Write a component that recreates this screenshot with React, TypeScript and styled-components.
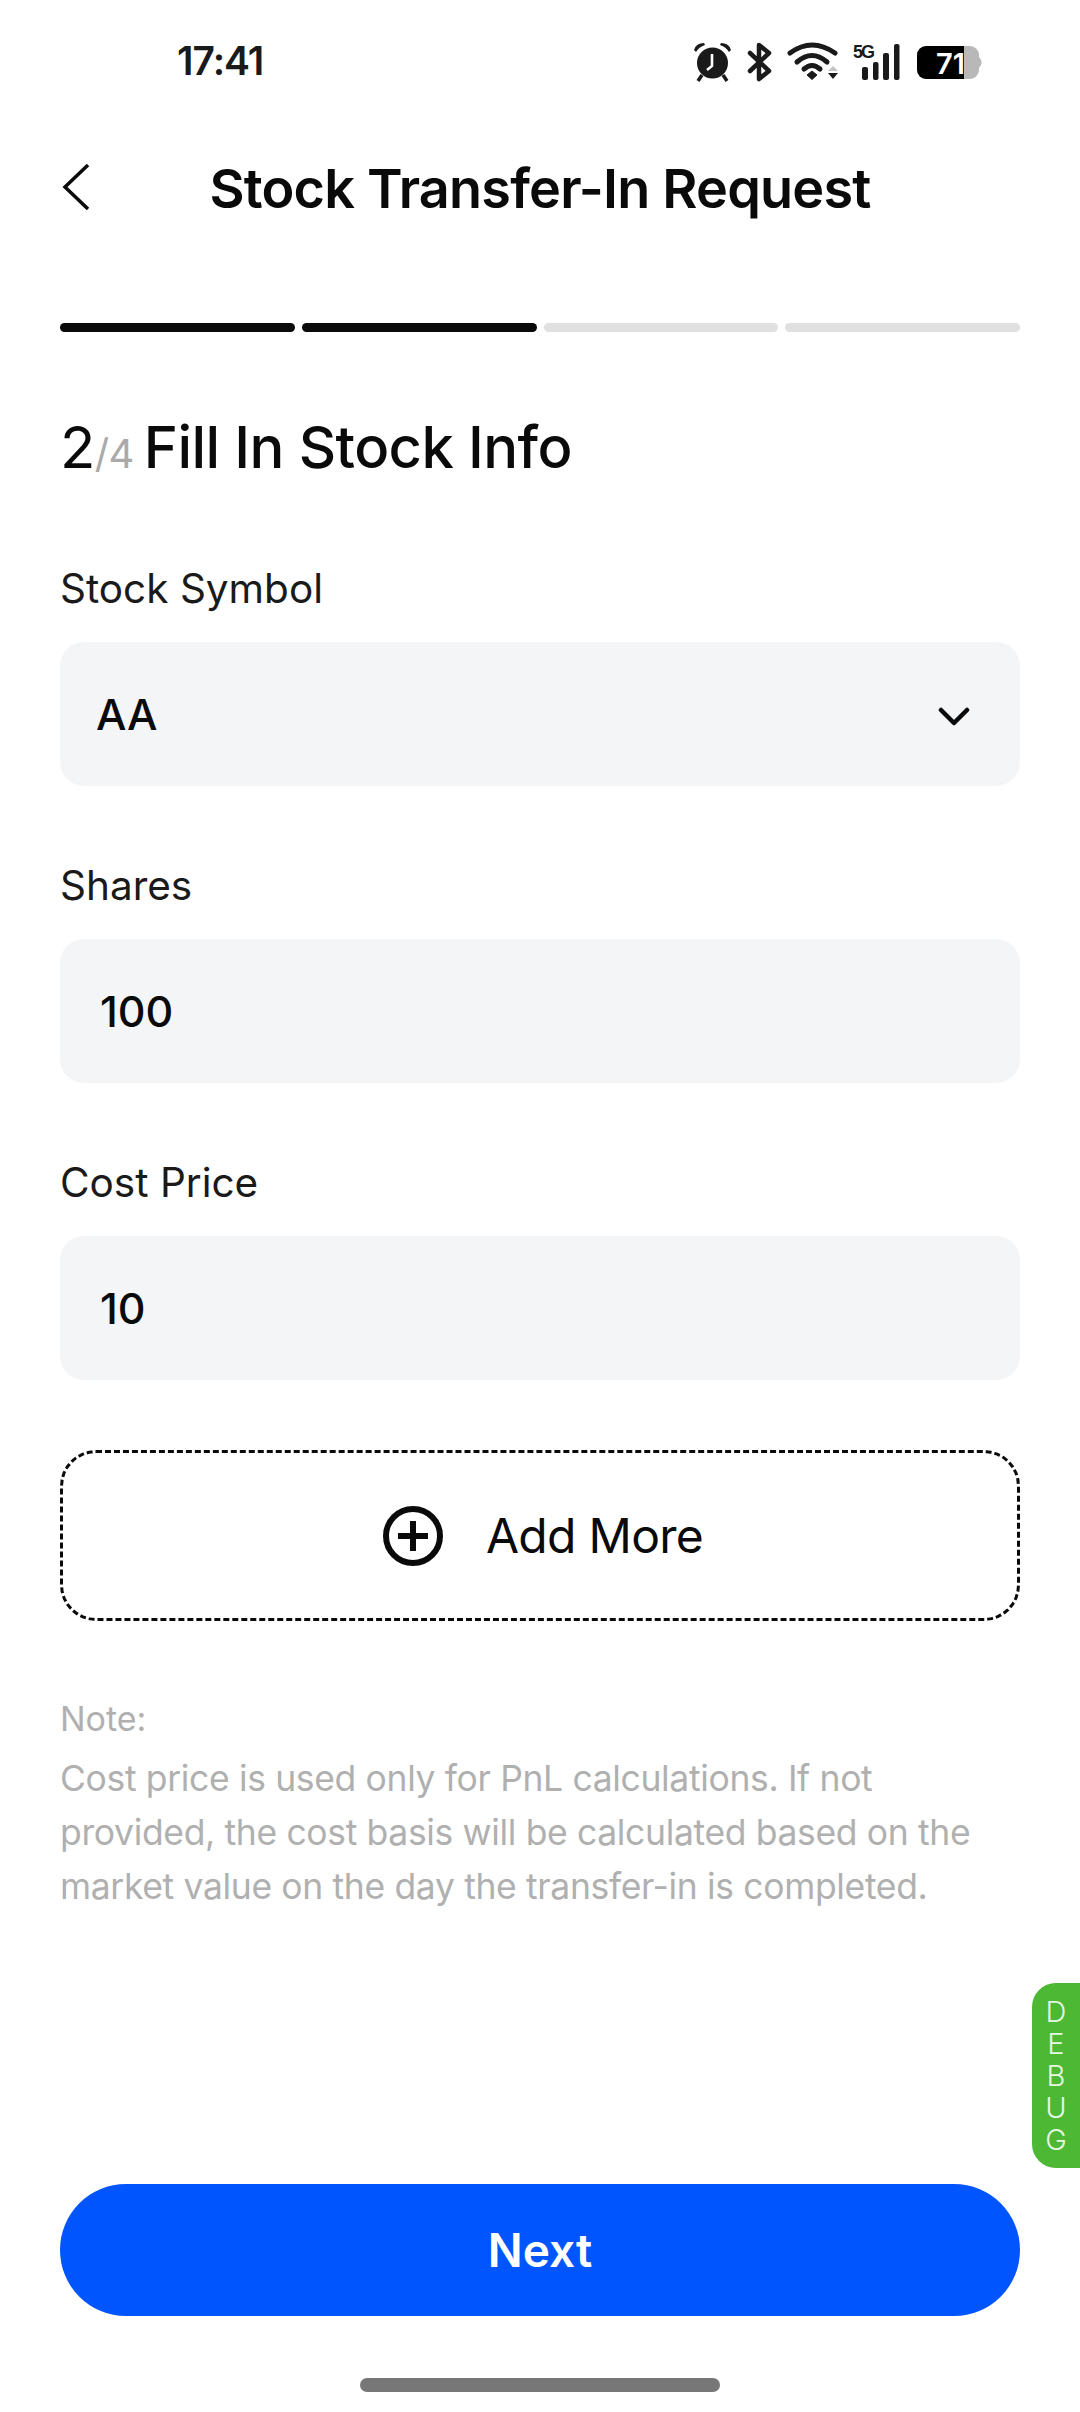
import React from 'react';
import styled, { createGlobalStyle } from 'styled-components';

const GlobalStyle = createGlobalStyle`
  * { box-sizing: border-box; }
  html, body { margin: 0; padding: 0; background: #fff; }
  body { font-family: Inter, "Liberation Sans", sans-serif; color: #0a0a0a; }
`;

const Page = styled.div`
  position: relative;
  width: 1080px;
  height: 2412px;
  display: flex;
  flex-direction: column;
  overflow: hidden;
  background: #fff;
`;

const StatusBar = styled.div`
  height: 120px;
  padding: 0 94px 0 177px;
  display: flex;
  align-items: center;
  justify-content: space-between;
`;

const Time = styled.div`
  font-size: 39px;
  font-weight: 600;
  letter-spacing: -1px;
  color: #1a1a1a;
`;

const StatusIcons = styled.div`
  display: flex;
  align-items: center;
  margin-top: 5px;
`;

const Header = styled.div`
  position: relative;
  height: 136px;
  display: flex;
  align-items: center;
  justify-content: center;
`;

const BackButton = styled.div`
  position: absolute;
  left: 62px;
  top: 44px;
  display: flex;
`;

const Title = styled.h1`
  margin: 0;
  font-size: 54px;
  font-weight: 600;
  letter-spacing: -0.8px;
`;

const Content = styled.div`
  flex: 1;
  padding: 0 60px;
  display: flex;
  flex-direction: column;
`;

const Steps = styled.div`
  margin-top: 67px;
  display: grid;
  grid-template-columns: repeat(4, 1fr);
  gap: 7px;
`;

const Step = styled.div<{ $active?: boolean }>`
  height: 9px;
  border-radius: 5px;
  background: ${({ $active }) => ($active ? '#0a0a0a' : '#e0e0e0')};
`;

const Heading = styled.div`
  margin-top: 85px;
  margin-bottom: 12px;
  height: 60px;
  display: flex;
  align-items: baseline;
  font-size: 58px;
  font-weight: 500;
  letter-spacing: -0.6px;
  line-height: 60px;
`;

const StepCurrent = styled.span`
  font-weight: 400;
`;

const StepTotal = styled.span`
  font-size: 40px;
  font-weight: 400;
  color: #aaa;
  margin-right: 10px;
`;

const Field = styled.div`
  margin-top: 75px;
  display: flex;
  flex-direction: column;
  gap: 28px;
`;

const Label = styled.div`
  font-size: 40.5px;
  line-height: 50px;
  color: #1a1a1a;
`;

const InputBox = styled.div<{ $select?: boolean }>`
  height: 144px;
  border-radius: 24px;
  background: #f4f5f7;
  padding: ${({ $select }) => ($select ? '0 50px 0 36px' : '0 40px')};
  display: flex;
  align-items: center;
  justify-content: space-between;
  font-size: 43px;
  font-weight: 500;
`;

const AddMore = styled.div`
  margin-top: 70px;
  height: 171px;
  padding-left: 6px;
  border: 3px dashed #0a0a0a;
  border-radius: 36px;
  display: flex;
  align-items: center;
  justify-content: center;
  gap: 43px;
  font-size: 48px;
  letter-spacing: -0.7px;
`;

const Note = styled.div`
  margin-top: 71px;
  font-size: 35.5px;
  letter-spacing: -0.35px;
  line-height: 54px;
  color: #b0b0b0;
`;

const NoteTitle = styled.div`
  font-size: 34px;
  letter-spacing: 0;
  line-height: 54px;
  margin-bottom: 6px;
`;

const NextButton = styled.div`
  position: absolute;
  left: 60px;
  right: 60px;
  bottom: 96px;
  height: 132px;
  border-radius: 66px;
  background: #0055ff;
  color: #fff;
  display: flex;
  align-items: center;
  justify-content: center;
  font-size: 46px;
  font-weight: 600;
`;

const HomeIndicator = styled.div`
  position: absolute;
  left: 360px;
  bottom: 20px;
  width: 360px;
  height: 14px;
  border-radius: 7px;
  background: #777;
`;

const DebugTab = styled.div`
  position: absolute;
  right: 0;
  top: 1983px;
  width: 48px;
  height: 185px;
  border-radius: 24px 0 0 24px;
  background: #4cb834;
  color: #e6f6e0;
  display: flex;
  flex-direction: column;
  align-items: center;
  justify-content: center;
  font-size: 29px;
  font-weight: 300;
  line-height: 32px;
`;

function StatusGlyphs() {
  return (
    <StatusIcons>
      <svg width="296" height="44" viewBox="0 0 296 44">
        {/* alarm */}
        <circle cx="22.5" cy="22" r="15.5" fill="#1a1a1a" />
        <path d="M4 9 Q6 2 14 2 L15 4 Q9 6 6 11Z M41 9 Q39 2 31 2 L30 4 Q36 6 39 11Z" fill="#1a1a1a" />
        <path d="M12 34 L8 40 M33 34 L37 40" stroke="#1a1a1a" strokeWidth="3.5" />
        <path d="M22 13 V25 L17 29" stroke="#fff" strokeWidth="2.6" fill="none" />
        {/* bluetooth */}
        <path d="M60 12 L79 30 L69 38 V4 L79 12 L60 30" stroke="#1a1a1a" strokeWidth="4.5" fill="none" strokeLinejoin="round" strokeLinecap="round" />
        {/* wifi */}
        <g fill="none" stroke="#1a1a1a" strokeWidth="5" strokeLinecap="round">
          <path d="M100 12 Q122 -4 145 12" />
          <path d="M107 21 Q122 8 137 21" />
          <path d="M114 28 Q122 21 130 28" />
        </g>
        <path d="M117 34 L122 30 L127 34 L122 38.5Z" fill="#1a1a1a" stroke="#1a1a1a" strokeWidth="1" />
        <path d="M138 30 L143 25 L148 30Z" fill="#c4c4c4" />
        <path d="M138 32 L148 32 L143 38Z" fill="#1a1a1a" />
        {/* 5G + signal */}
        <text x="163" y="17" fontSize="18" fontWeight="700" fill="#1a1a1a" fontFamily="'Liberation Sans', sans-serif" textLength="22">5G</text>
        <rect x="172" y="26" width="6" height="13" rx="2" fill="#1a1a1a" />
        <rect x="183" y="21" width="5.5" height="18" rx="2" fill="#1a1a1a" />
        <rect x="193" y="12" width="6" height="27" rx="2" fill="#1a1a1a" />
        <rect x="204" y="3" width="5.5" height="36" rx="2" fill="#1a1a1a" />
        {/* battery */}
        <rect x="227" y="5" width="62" height="33" rx="9" fill="#b8b8b8" />
        <path d="M236 5 H274 V38 H236 A9 9 0 0 1 227 29 V14 A9 9 0 0 1 236 5Z" fill="#000" />
        <path d="M289 16 Q294 21.5 289 27Z" fill="#b8b8b8" />
        <text x="246" y="33" fontSize="29" fontWeight="600" fill="#fff" fontFamily="Inter, sans-serif">71</text>
      </svg>
    </StatusIcons>
  );
}

function App() {
  return (
    <Page>
      <GlobalStyle />
      <StatusBar>
        <Time>17:41</Time>
        <StatusGlyphs />
      </StatusBar>
      <Header>
        <BackButton>
          <svg width="30" height="46" viewBox="0 0 30 46">
            <path d="M26 1 L3 23 L26 45" stroke="#0a0a0a" strokeWidth="3.5" fill="none" />
          </svg>
        </BackButton>
        <Title>Stock Transfer-In Request</Title>
      </Header>
      <Content>
        <Steps>
          <Step $active />
          <Step $active />
          <Step />
          <Step />
        </Steps>
        <Heading>
          <StepCurrent>2</StepCurrent>
          <StepTotal>/4</StepTotal>
          Fill In Stock Info
        </Heading>
        <Field>
          <Label>Stock Symbol</Label>
          <InputBox $select>
            AA
            <svg width="32" height="26" viewBox="0 -6 32 26">
              <path d="M3 3 L16 16 L29 3" stroke="#0a0a0a" strokeWidth="4.5" fill="none" strokeLinecap="round" strokeLinejoin="round" />
            </svg>
          </InputBox>
        </Field>
        <Field>
          <Label>Shares</Label>
          <InputBox>100</InputBox>
        </Field>
        <Field>
          <Label>Cost Price</Label>
          <InputBox>10</InputBox>
        </Field>
        <AddMore>
          <svg width="60" height="60" viewBox="0 0 60 60">
            <circle cx="30" cy="30" r="27" stroke="#0a0a0a" strokeWidth="6" fill="none" />
            <path d="M30 15 V45 M15 30 H45" stroke="#0a0a0a" strokeWidth="6" />
          </svg>
          Add More
        </AddMore>
        <Note>
          <NoteTitle>Note:</NoteTitle>
          Cost price is used only for PnL calculations. If not provided, the cost basis will be calculated based on the market value on the day the transfer-in is completed.
        </Note>
      </Content>
      <NextButton>Next</NextButton>
      <HomeIndicator />
      <DebugTab>
        <span>D</span>
        <span>E</span>
        <span>B</span>
        <span>U</span>
        <span>G</span>
      </DebugTab>
    </Page>
  );
}

export default App;
